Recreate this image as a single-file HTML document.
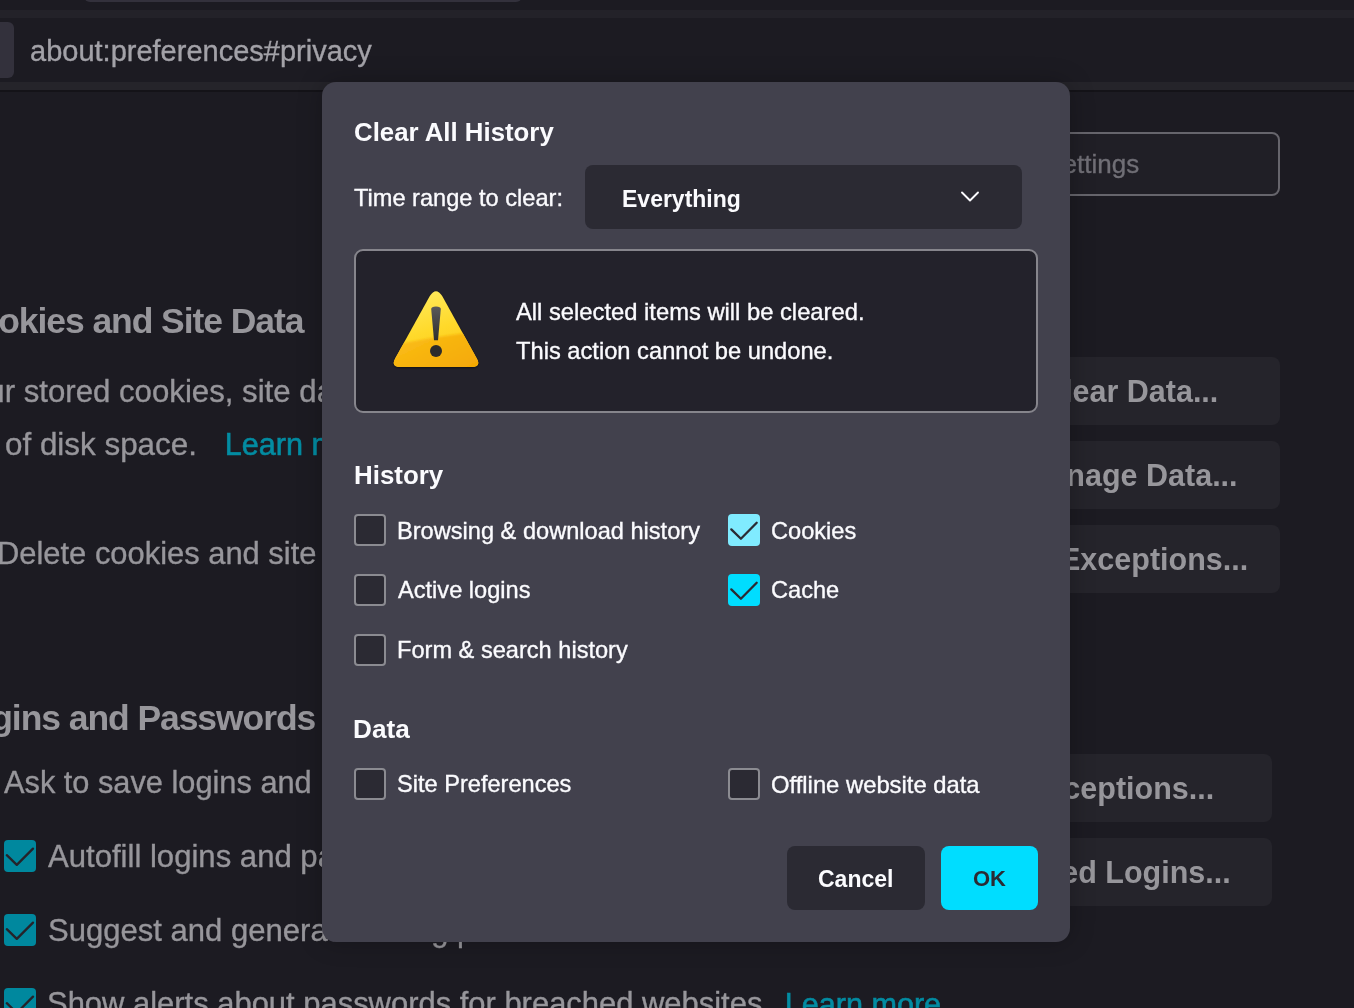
<!DOCTYPE html>
<html>
<head>
<meta charset="utf-8">
<style>
html,body{margin:0;padding:0;}
body{width:1354px;height:1008px;overflow:hidden;position:relative;background:#1c1b22;font-family:"Liberation Sans",sans-serif;}
.abs{position:absolute;}
.t,.dt,.dh,.pbt{will-change:transform;-webkit-text-stroke:0.35px currentColor;}
.dh,.pbt,.ph,.bd{-webkit-text-stroke:0;}
.t{position:absolute;white-space:nowrap;line-height:1;}
.pt{color:#97969b;font-size:30.6px;}
.ph{color:#97969b;font-weight:bold;font-size:33.3px;}
.link{color:#038ca2;-webkit-text-stroke:0.6px currentColor;}
.pbtn{position:absolute;background:#25242b;border-radius:8px;}
.pbt{position:absolute;white-space:nowrap;line-height:1;font-weight:bold;color:#97969b;font-size:30.5px;}
.pchk{position:absolute;width:32px;height:32px;background:#00889e;border-radius:4px;}
.pchk svg,.dchk svg{position:absolute;left:0;top:0;}
.dt{position:absolute;white-space:nowrap;line-height:1;color:#fbfbfe;font-size:23.6px;}
.dh{position:absolute;white-space:nowrap;line-height:1;color:#fbfbfe;font-size:26.2px;font-weight:bold;}
.dchk{position:absolute;width:32px;height:32px;box-sizing:border-box;border-radius:4px;}
.unc{background:#2b2a33;border:2px solid #8b8b91;}
</style>
</head>
<body>
<!-- browser chrome -->
<div class="abs" style="left:83.5px;top:-10px;width:438px;height:12px;background:#33313c;border-radius:0 0 6px 6px;"></div>
<div class="abs" style="left:0;top:10px;width:1354px;height:8px;background:#232229;"></div>
<div class="abs" style="left:-10px;top:22px;width:24px;height:56px;background:#33313c;border-radius:6px;"></div>
<div class="t" style="left:30px;top:37px;font-size:29px;color:#a3a2a8;">about:preferences#privacy</div>
<div class="abs" style="left:0;top:82px;width:1354px;height:8px;background:#25242a;"></div>
<div class="abs" style="left:0;top:90px;width:1354px;height:2px;background:#141318;"></div>

<!-- search box -->
<div class="abs" style="left:880px;top:132px;width:400px;height:64px;box-sizing:border-box;border:2px solid #66656c;border-radius:8px;background:#201f26;"></div>
<div class="t" style="right:215px;top:151px;font-size:26px;color:#706f76;">Search settings</div>

<!-- page left content -->
<div class="t ph" style="left:-47.5px;top:304px;font-size:35.5px;letter-spacing:-1.07px;">Cookies and Site Data</div>
<div class="t pt" style="left:-48.5px;top:376px;font-size:31.2px;">Your stored cookies, site data, and cache are currently using</div>
<div class="t pt" style="left:5px;top:428.5px;font-size:31.4px;">of disk space.<span class="link" style="position:absolute;left:219.7px;top:0;font-size:30.6px;">Learn more</span></div>
<div class="t pt" style="left:-3.5px;top:539px;font-size:30.9px;">Delete cookies and site data when Firefox is closed</div>
<div class="t ph" style="left:-50.3px;top:701px;font-size:35.5px;letter-spacing:-1.07px;">Logins and Passwords</div>
<div class="t pt" style="left:4px;top:768px;font-size:30.75px;">Ask to save logins and passwords for websites</div>
<div class="pchk" style="left:4px;top:840px;"><svg width="32" height="32"><path d="M2.8 15.2 L12.8 24.9 L29 8.6" fill="none" stroke="#25232a" stroke-width="2.3" stroke-linecap="round" stroke-linejoin="round"/></svg></div>
<div class="t pt" style="left:48px;top:841px;font-size:31.1px;">Autofill logins and passwords</div>
<div class="pchk" style="left:4px;top:914px;"><svg width="32" height="32"><path d="M2.8 15.2 L12.8 24.9 L29 8.6" fill="none" stroke="#25232a" stroke-width="2.3" stroke-linecap="round" stroke-linejoin="round"/></svg></div>
<div class="t pt" style="left:48px;top:914.5px;font-size:31.05px;">Suggest and generate strong passwords</div>
<div class="pchk" style="left:4px;top:988px;"><svg width="32" height="32"><path d="M2.8 15.2 L12.8 24.9 L29 8.6" fill="none" stroke="#25232a" stroke-width="2.3" stroke-linecap="round" stroke-linejoin="round"/></svg></div>
<div class="t pt" style="left:47px;top:989px;font-size:30.95px;">Show alerts about passwords for breached websites<span class="link" style="position:absolute;left:737.7px;top:0;font-size:30.6px;">Learn more</span></div>

<!-- page right buttons -->
<div class="pbtn" style="left:900px;top:357px;width:380px;height:68px;"></div>
<div class="pbt" style="right:135.3px;top:376px;">Clear Data...</div>
<div class="pbtn" style="left:900px;top:441px;width:380px;height:68px;"></div>
<div class="pbt" style="right:116.3px;top:459.5px;">Manage Data...</div>
<div class="pbtn" style="left:900px;top:525px;width:380px;height:68px;"></div>
<div class="pbt" style="right:106px;top:543.5px;">Manage Exceptions...</div>
<div class="pbtn" style="left:900px;top:754px;width:372px;height:68px;"></div>
<div class="pbt" style="right:140.3px;top:773px;">Manage Exceptions...</div>
<div class="pbtn" style="left:900px;top:838px;width:372px;height:68px;"></div>
<div class="pbt" style="right:123.3px;top:857px;">Saved Logins...</div>

<!-- dialog -->
<div class="abs" style="left:322px;top:82px;width:748px;height:860px;background:#42414d;border-radius:14px;box-shadow:0 0 24px rgba(0,0,0,0.25);"></div>
<div class="dh" style="left:354px;top:119.5px;font-size:25.8px;">Clear All History</div>
<div class="dt" style="left:354px;top:187px;">Time range to clear:</div>
<div class="abs" style="left:585px;top:165px;width:437px;height:63.5px;background:#2b2a33;border-radius:8px;"></div>
<div class="dt bd" style="left:622px;top:188px;font-weight:bold;font-size:23px;">Everything</div>
<svg class="abs" style="left:958px;top:188px;" width="24" height="18"><path d="M4 4.5 L12 12.5 L20 4.5" fill="none" stroke="#fbfbfe" stroke-width="1.9" stroke-linecap="round" stroke-linejoin="round"/></svg>

<div class="abs" style="left:354px;top:248.6px;width:684px;height:164px;box-sizing:border-box;border:2px solid #86858c;border-radius:9px;background:#23222b;"></div>
<svg class="abs" style="left:390px;top:286px;" width="96" height="90" viewBox="0 0 96 90">
  <defs>
    <linearGradient id="wg" x1="0" y1="0" x2="0.35" y2="1">
      <stop offset="0" stop-color="#ffee66"/>
      <stop offset="0.6" stop-color="#ffd92a"/>
      <stop offset="1" stop-color="#fcc81c"/>
    </linearGradient>
    <linearGradient id="wg2" x1="0" y1="0" x2="1" y2="1">
      <stop offset="0" stop-color="#fcc21a"/>
      <stop offset="1" stop-color="#f2a200"/>
    </linearGradient>
    <linearGradient id="bg" x1="0" y1="0" x2="0" y2="1">
      <stop offset="0" stop-color="#5a5a5a"/>
      <stop offset="1" stop-color="#2e2e2e"/>
    </linearGradient>
    <clipPath id="tc"><path d="M39.8 10 Q46 0.5 52.2 10 L86.8 72.5 Q91.5 81 81.5 81 L10.5 81 Q0.5 81 5.2 72.5 Z"/></clipPath>
    <filter id="sb" x="-20%" y="-20%" width="140%" height="140%"><feGaussianBlur stdDeviation="1.3"/></filter>
    <filter id="sh" x="-10%" y="-10%" width="120%" height="130%"><feGaussianBlur stdDeviation="1.2"/></filter>
  </defs>
  <path d="M39.8 11 Q46 1.5 52.2 11 L86.8 73.5 Q91.5 82 81.5 82 L10.5 82 Q0.5 82 5.2 73.5 Z" fill="rgba(0,0,0,0.55)" filter="url(#sh)"/>
  <path d="M39.8 10 Q46 0.5 52.2 10 L86.8 72.5 Q91.5 81 81.5 81 L10.5 81 Q0.5 81 5.2 72.5 Z" fill="url(#wg)"/>
  <g clip-path="url(#tc)"><path d="M-5 61 Q40 51 100 44 L100 95 L-5 95 Z" fill="url(#wg2)" filter="url(#sb)"/></g>
  <path d="M41.2 23 Q41.2 20.5 46 20.5 Q50.8 20.5 50.8 23 L48 54.3 L44 54.3 Z" fill="url(#bg)"/>
  <circle cx="46" cy="64.9" r="6" fill="#2c2b2b"/>
</svg>
<div class="dt" style="left:516px;top:300px;font-size:23.75px;">All selected items will be cleared.</div>
<div class="dt" style="left:516px;top:340px;font-size:23.7px;">This action cannot be undone.</div>

<div class="dh" style="left:354px;top:463px;font-size:25.9px;">History</div>
<div class="dchk unc" style="left:354px;top:514px;"></div>
<div class="dt" style="left:397px;top:520px;">Browsing &amp; download history</div>
<div class="dchk unc" style="left:354px;top:574px;"></div>
<div class="dt" style="left:398px;top:579px;">Active logins</div>
<div class="dchk unc" style="left:354px;top:634px;"></div>
<div class="dt" style="left:397px;top:639px;">Form &amp; search history</div>
<div class="dchk" style="left:728px;top:514px;background:#80ebff;"><svg width="32" height="32"><path d="M3.3 15.4 L12.9 24.8 L28.7 8.7" fill="none" stroke="#2b2a33" stroke-width="2.3" stroke-linecap="round" stroke-linejoin="round"/></svg></div>
<div class="dt" style="left:771px;top:520px;">Cookies</div>
<div class="dchk" style="left:728px;top:574px;background:#00ddff;"><svg width="32" height="32"><path d="M3.3 15.4 L12.9 24.8 L28.7 8.7" fill="none" stroke="#2b2a33" stroke-width="2.3" stroke-linecap="round" stroke-linejoin="round"/></svg></div>
<div class="dt" style="left:771px;top:579px;">Cache</div>

<div class="dh" style="left:353px;top:716px;">Data</div>
<div class="dchk unc" style="left:354px;top:768px;"></div>
<div class="dt" style="left:397px;top:773px;">Site Preferences</div>
<div class="dchk unc" style="left:728px;top:768px;"></div>
<div class="dt" style="left:771px;top:773px;font-size:23.8px;">Offline website data</div>

<div class="abs" style="left:787px;top:846px;width:138px;height:64px;background:#2b2a33;border-radius:8px;"></div>
<div class="dt bd" style="left:818px;top:868px;font-weight:bold;font-size:23px;">Cancel</div>
<div class="abs" style="left:941px;top:846px;width:97px;height:64px;background:#00ddff;border-radius:8px;"></div>
<div class="dt bd" style="left:973px;top:868px;font-weight:bold;font-size:22px;color:#2b2a33;">OK</div>
</body>
</html>
